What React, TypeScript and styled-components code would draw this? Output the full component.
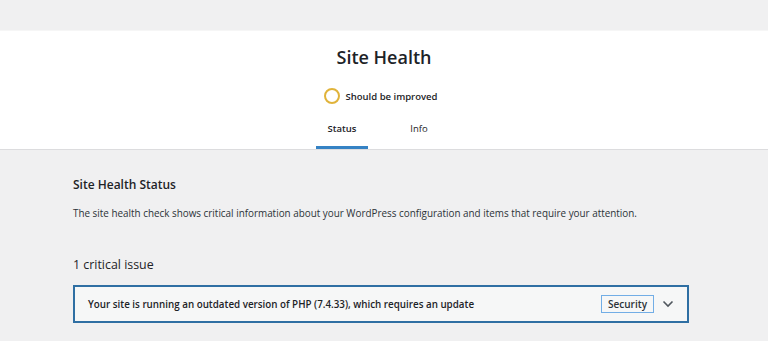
import styled, { createGlobalStyle } from 'styled-components';

const GlobalStyle = createGlobalStyle`
  html, body {
    margin: 0;
    padding: 0;
    background: #f0f0f1;
  }
  body {
    font-family: 'Open Sans', 'Noto Sans', sans-serif;
    color: #1d2327;
    -webkit-font-smoothing: antialiased;
  }
`;

const Page = styled.div`
  padding-top: 30px;
  min-height: 341px;
  box-sizing: border-box;
`;

// 흰색 헤더 영역 (제목 + 상태 + 탭)
const Header = styled.header`
  background: #fff;
  border-top: 1px solid #f6f6f6;
  border-bottom: 1px solid #dcdcde;
  display: flex;
  flex-direction: column;
  align-items: center;
  padding-top: 12px;
`;

const Title = styled.h1`
  margin: 0;
  font-size: 18px;
  font-weight: 600;
  line-height: 28px;
  color: #1d2327;
`;

const StatusRow = styled.div`
  margin: 15px 7px 0 0;
  display: flex;
  align-items: center;
  gap: 6px;
  height: 20px;
`;

const StatusRing = styled.span`
  width: 12px;
  height: 12px;
  border-radius: 50%;
  border: 2px solid #dba617;
  opacity: 0.85;
`;

const StatusText = styled.span`
  font-size: 9.5px;
  font-weight: 600;
  color: #1d2327;
`;

const Tabs = styled.nav`
  margin: 7px 7px 0 0;
  display: flex;
  gap: 25px;
`;

const Tab = styled.a<{ $active?: boolean }>`
  display: block;
  width: 52px;
  text-align: center;
  font-size: 9.5px;
  font-weight: ${({ $active }) => ($active ? 600 : 400)};
  color: #1d2327;
  padding: 9px 0 10px;
  border-bottom: 3px solid ${({ $active }) => ($active ? '#3582c4' : 'transparent')};
  line-height: 14px;
`;

// 본문 영역
const Body = styled.main`
  padding: 25px 79px 0 73px;
`;

const SectionTitle = styled.h2`
  margin: 0;
  font-size: 12px;
  font-weight: 600;
  line-height: 20px;
`;

const Description = styled.p`
  margin: 9px 0 0;
  font-size: 9.9px;
  line-height: 18px;
  color: #2c3338;
`;

const IssueCount = styled.h3`
  margin: 33px 0 0;
  font-size: 12.4px;
  font-weight: 400;
  line-height: 20px;
`;

const Issue = styled.div`
  margin-top: 10px;
  height: 38px;
  box-sizing: border-box;
  border: 2px solid #2f6fa3;
  background: #f6f7f7;
  display: flex;
  align-items: center;
  padding: 0 12px 0 13px;
`;

const IssueTitle = styled.span`
  flex: 1;
  font-size: 9.8px;
  font-weight: 600;
  color: #1d2327;
`;

const Badge = styled.span`
  border: 1px solid #72aee6;
  background: #f6f7f7;
  font-size: 10px;
  font-weight: 600;
  line-height: 16px;
  padding: 0 6px;
  color: #2c3338;
`;

const Chevron = styled.svg`
  margin-left: 7px;
  width: 14px;
  height: 14px;
`;

export default function App() {
  return (
    <Page>
      <GlobalStyle />
      <Header>
        <Title>Site Health</Title>
        <StatusRow>
          <StatusRing />
          <StatusText>Should be improved</StatusText>
        </StatusRow>
        <Tabs>
          <Tab $active>Status</Tab>
          <Tab>Info</Tab>
        </Tabs>
      </Header>
      <Body>
        <SectionTitle>Site Health Status</SectionTitle>
        <Description>
          The site health check shows critical information about your WordPress configuration and items that
          require your attention.
        </Description>
        <IssueCount>1 critical issue</IssueCount>
        <Issue>
          <IssueTitle>Your site is running an outdated version of PHP (7.4.33), which requires an update</IssueTitle>
          <Badge>Security</Badge>
          <Chevron viewBox="0 0 14 14">
            <path d="M2.5 4.5 L7 9 L11.5 4.5" fill="none" stroke="#50575e" strokeWidth="1.6" />
          </Chevron>
        </Issue>
      </Body>
    </Page>
  );
}
